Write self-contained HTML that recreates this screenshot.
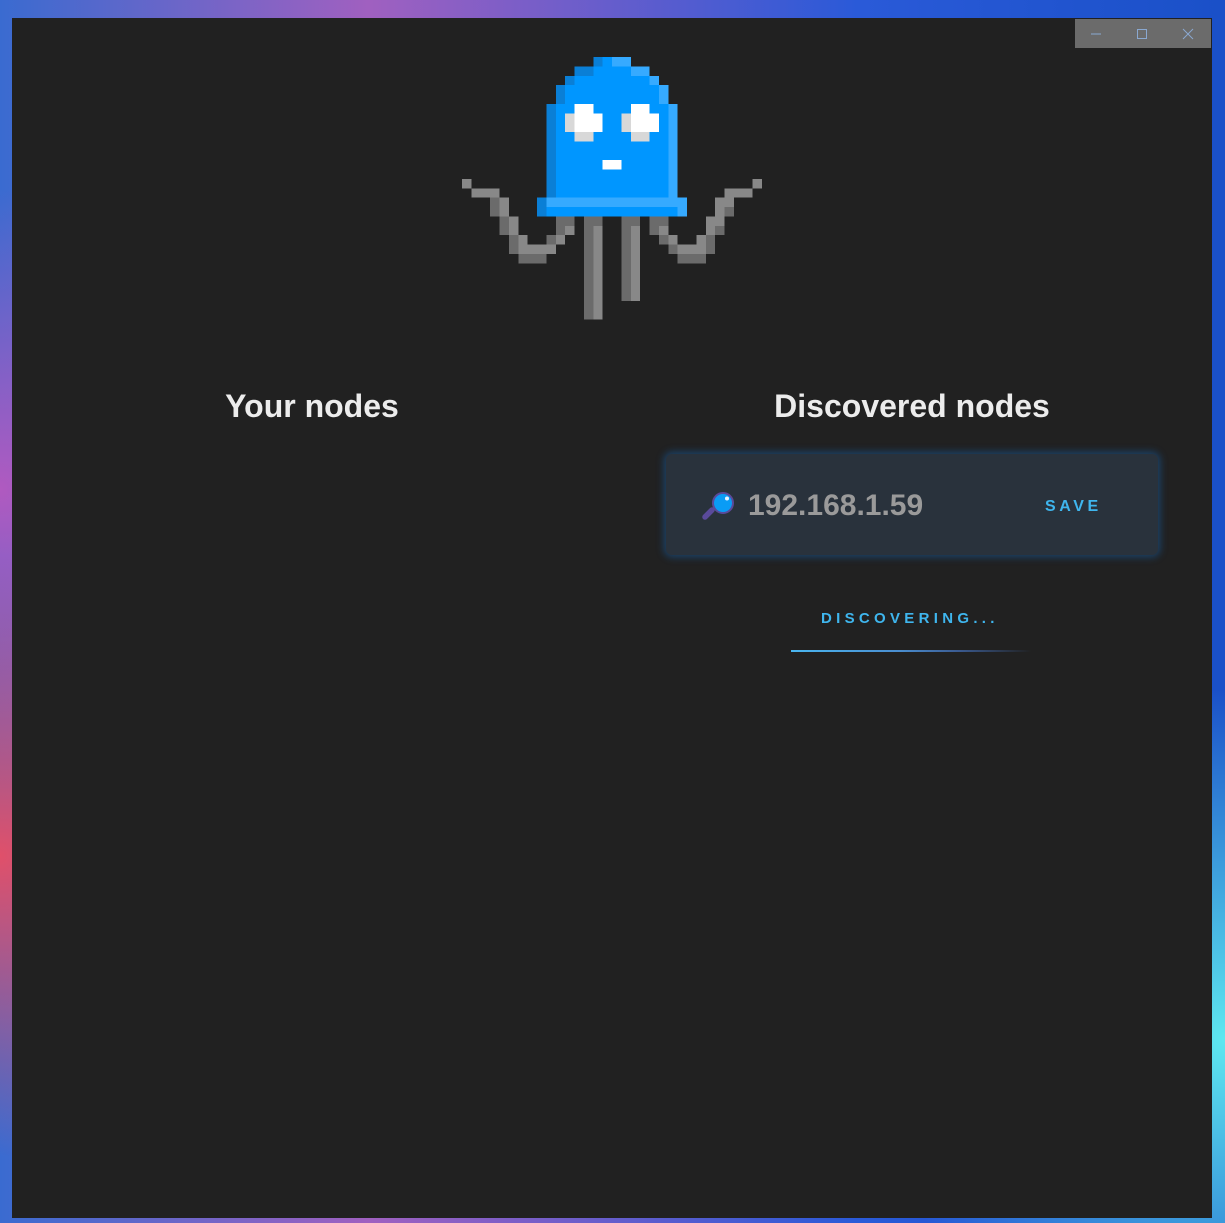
<!DOCTYPE html>
<html><head><meta charset="utf-8"><style>
html,body{margin:0;padding:0;width:1225px;height:1223px;overflow:hidden;font-family:"Liberation Sans",sans-serif}
body{background:
 radial-gradient(circle at 0% 70%, #e0506a 0, rgba(224,80,106,0) 300px),
 radial-gradient(circle at 0% 40%, #b05ac0 0, rgba(176,90,192,0) 300px),
 radial-gradient(circle at 100% 85%, #5ee8f0 0, rgba(94,232,240,0) 350px),
 linear-gradient(90deg,#3a6bd0 0%,#a060c0 30%,#2a5ad8 70%,#1a50c8 100%);}
.win{position:absolute;left:12px;top:18px;width:1200px;height:1200px;background:#212121}
.tb{position:absolute;left:1063px;top:1px;width:136px;height:29px;background:#6b6b6b}
h2{position:absolute;margin:0;font-size:32px;font-weight:bold;color:#ececec;top:370px;width:400px;text-align:center}
.card{position:absolute;left:654px;top:436px;width:492px;height:101px;background:#29323c;border-radius:6px;box-shadow:0 0 8px 2px rgba(20,110,200,0.45)}
.ip{position:absolute;left:82px;top:35px;font-size:30px;font-weight:bold;color:#9a9a9a;line-height:34px}
.save{position:absolute;left:379px;top:44px;font-size:16px;font-weight:bold;color:#3fb6ee;letter-spacing:3.6px}
.disc{position:absolute;left:809px;top:592px;font-size:15px;font-weight:bold;color:#3fb6ee;letter-spacing:4.3px}
.bar{position:absolute;left:779px;top:632px;width:240px;height:2px;background:linear-gradient(90deg,#4ab6f0,#4a8ed0 45%,#3a5a90 70%,rgba(40,60,100,0))}
</style></head><body>
<div class="win">
<div class="tb">
<svg width="136" height="29" style="position:absolute;left:0;top:0">
<line x1="16" y1="15" x2="26" y2="15" stroke="#8aa8d0" stroke-width="1"/>
<rect x="62.5" y="10.5" width="9" height="9" fill="none" stroke="#8aa8d0" stroke-width="1"/>
<line x1="108" y1="10" x2="118" y2="20" stroke="#8aa8d0"/><line x1="118" y1="10" x2="108" y2="20" stroke="#8aa8d0"/>
</svg></div>
<svg style="position:absolute;left:449.7px;top:38.7px" width="300" height="272" viewBox="0 0 32 29" shape-rendering="crispEdges">
<g fill="#0a7fd6">
<rect x="14" y="0" width="1" height="1"/><rect x="12" y="1" width="2" height="1"/><rect x="11" y="2" width="1" height="1"/><rect x="10" y="3" width="1" height="2"/><rect x="9" y="5" width="1" height="10"/><rect x="8" y="15" width="1" height="2"/></g>
<g fill="#0096ff">
<rect x="15" y="0" width="1" height="1"/><rect x="14" y="1" width="4" height="1"/><rect x="12" y="2" width="8" height="1"/><rect x="11" y="3" width="10" height="2"/><rect x="10" y="5" width="12" height="10"/><rect x="9" y="16" width="14" height="1"/></g>
<g fill="#36aaff">
<rect x="16" y="0" width="2" height="1"/><rect x="18" y="1" width="2" height="1"/><rect x="20" y="2" width="1" height="1"/><rect x="21" y="3" width="1" height="2"/><rect x="22" y="5" width="1" height="10"/><rect x="9" y="15" width="15" height="1"/><rect x="23" y="16" width="1" height="1"/></g>
<g fill="#d8d8d8"><rect x="11" y="6" width="1" height="2"/><rect x="12" y="8" width="2" height="1"/><rect x="17" y="6" width="1" height="2"/><rect x="18" y="8" width="2" height="1"/></g>
<g fill="#fff"><rect x="12" y="5" width="2" height="1"/><rect x="12" y="6" width="3" height="2"/><rect x="18" y="5" width="2" height="1"/><rect x="18" y="6" width="3" height="2"/><rect x="15" y="11" width="2" height="1"/></g>
<g fill="#888">
<rect x="0" y="13" width="1" height="1"/><rect x="1" y="14" width="3" height="1"/><rect x="4" y="15" width="1" height="2"/><rect x="5" y="17" width="1" height="2"/><rect x="11" y="18" width="1" height="1"/><rect x="6" y="19" width="1" height="1"/><rect x="10" y="19" width="1" height="1"/><rect x="6" y="20" width="4" height="1"/>
<rect x="14" y="18" width="1" height="10"/><rect x="18" y="18" width="1" height="8"/>
<rect x="31" y="13" width="1" height="1"/><rect x="28" y="14" width="3" height="1"/><rect x="27" y="15" width="2" height="1"/><rect x="27" y="16" width="1" height="1"/><rect x="26" y="17" width="2" height="1"/><rect x="26" y="18" width="1" height="1"/><rect x="21" y="18" width="1" height="1"/><rect x="22" y="19" width="1" height="1"/><rect x="25" y="19" width="1" height="1"/><rect x="23" y="20" width="3" height="1"/></g>
<g fill="#6b6b6b">
<rect x="3" y="15" width="1" height="2"/><rect x="4" y="17" width="1" height="2"/><rect x="10" y="17" width="2" height="1"/><rect x="10" y="18" width="1" height="1"/><rect x="5" y="19" width="1" height="2"/><rect x="9" y="19" width="1" height="1"/><rect x="6" y="21" width="3" height="1"/>
<rect x="13" y="17" width="2" height="1"/><rect x="13" y="18" width="1" height="10"/><rect x="17" y="17" width="2" height="1"/><rect x="17" y="18" width="1" height="8"/>
<rect x="28" y="16" width="1" height="1"/><rect x="20" y="17" width="2" height="1"/><rect x="20" y="18" width="1" height="1"/><rect x="27" y="18" width="1" height="1"/><rect x="21" y="19" width="1" height="1"/><rect x="26" y="19" width="1" height="2"/><rect x="22" y="20" width="1" height="1"/><rect x="23" y="21" width="3" height="1"/></g>
</svg>
<h2 style="left:100px">Your nodes</h2>
<h2 style="left:700px">Discovered nodes</h2>
<div class="card">
<svg style="position:absolute;left:33px;top:32px" width="40" height="40">
<line x1="13" y1="24" x2="6" y2="31" stroke="#5a4a9a" stroke-width="5.5" stroke-linecap="round"/>
<circle cx="24" cy="17" r="10" fill="#0a9cf5" stroke="#5a4a9a" stroke-width="2"/>
<circle cx="28" cy="12.5" r="2" fill="#e8f4ff"/>
</svg>
<div class="ip">192.168.1.59</div>
<div class="save">SAVE</div>
</div>
<div class="disc">DISCOVERING...</div>
<div class="bar"></div>
</div>
</body></html>
